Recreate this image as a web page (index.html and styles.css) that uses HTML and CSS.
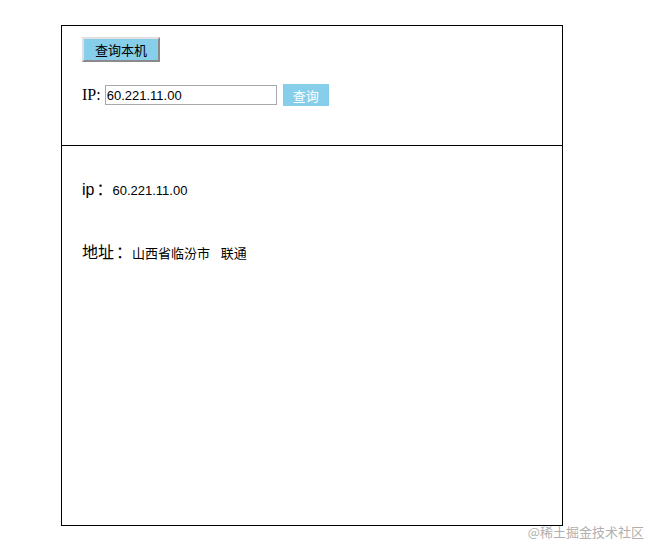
FILE: index.html
```html
<!DOCTYPE html>
<html lang="zh">
<head>
    <meta charset="UTF-8">
    <title>IP查询</title>
    <link rel="stylesheet" href="styles.css">
</head>
<body>
    <div class="caja-ip">
        <div class="zona-buscar">
            <button class="btn-local">查询本机</button>
            <div class="fila-ip">
                <label class="etiqueta-ip">IP:</label>
                <input class="campo-ip" type="text" value="60.221.11.00">
                <button class="btn-buscar">查询</button>
            </div>
        </div>
        <div class="zona-resultado">
            <p class="linea"><span class="clave">ip<span class="sep">：</span></span><span class="valor">60.221.11.00</span></p>
            <p class="linea linea-dir"><span class="clave">地址<span class="sep">：</span></span><span class="valor">山西省临汾市&nbsp;&nbsp;&nbsp;联通</span></p>
        </div>
    </div>
    <div class="marca">@稀土掘金技术社区</div>
</body>
</html>
```

FILE: styles.css
```css
body {
    margin: 0;
    padding: 25px 0 0 61px;
    font-family: "Liberation Sans", "Noto Sans CJK SC", sans-serif;
    color: #000;
    background: #fff;
}

.caja-ip {
    width: 500px;
    height: 499px;
    border: 1px solid #000;
}

.zona-buscar {
    height: 120px;
    box-sizing: border-box;
    padding: 11px 20px 0;
    border-bottom: 1px solid #000;
}

.btn-local {
    display: block;
    height: 25px;
    padding: 0 11px;
    background-color: #87ceeb;
    border: 2px solid;
    border-color: #e0e0e0 #8a8a8a #8a8a8a #e0e0e0;
    font-family: "Liberation Sans", "Noto Sans CJK SC", sans-serif;
    font-size: 13px;
    color: #000;
}

.fila-ip {
    display: flex;
    align-items: center;
    margin-top: 22px;
    height: 22px;
}

.etiqueta-ip {
    font-family: "Liberation Serif", serif;
    font-size: 16px;
    margin-right: 4px;
}

.campo-ip {
    width: 172px;
    height: 20px;
    box-sizing: border-box;
    border: 1px solid #a9a9a9;
    padding: 0 1px;
    font-family: "Liberation Sans", sans-serif;
    font-size: 13px;
    color: #000;
}

.btn-buscar {
    height: 22px;
    margin-left: 6px;
    padding: 0 10px;
    border: none;
    background-color: #87ceeb;
    color: #fff;
    font-family: "Liberation Sans", "Noto Sans CJK SC", sans-serif;
    font-size: 13px;
}

.zona-resultado {
    padding: 0 20px;
}

.linea {
    margin: 33px 0 0;
    line-height: 22px;
    height: 22px;
}

.linea-dir {
    margin-top: 41px;
}

.clave {
    font-size: 16px;
}

/* los dos puntos quedan algo más centrados, como en el original */
.sep {
    padding-left: 2px;
}

.valor {
    font-size: 13px;
}

.marca {
    position: absolute;
    right: 6px;
    bottom: 4px;
    font-family: "Noto Sans CJK SC", sans-serif;
    font-size: 13px;
    color: #b0b0b0;
}
```
